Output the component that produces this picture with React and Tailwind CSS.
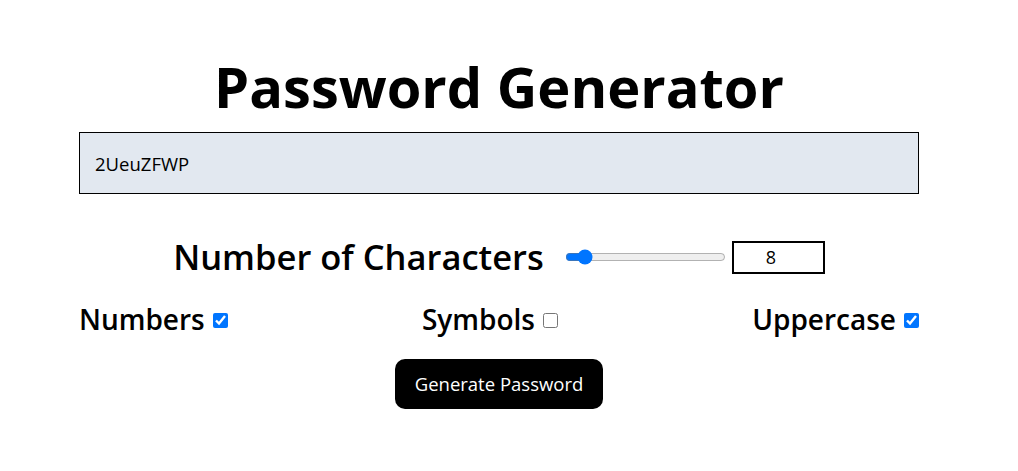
import { useState } from 'react'

function Option({ label, checked, onChange }) {
  return (
    <label className="flex items-center gap-2 text-[28px] font-semibold leading-none">
      {label}
      <input type="checkbox" checked={checked} onChange={onChange} className="mt-[3px] h-[15px] w-[15px] accent-[#0075ff]" />
    </label>
  )
}

export default function App() {
  const [length, setLength] = useState(8)
  const [numbers, setNumbers] = useState(true)
  const [symbols, setSymbols] = useState(false)
  const [upper, setUpper] = useState(true)

  return (
    <div className="min-h-[471px] bg-white font-['Open_Sans',sans-serif] text-black">
      <div className="ml-[79px] w-[840px] pt-[46px]">
        <h1 className="text-center text-[56px] font-bold leading-[80px]">Password Generator</h1>

        <input
          type="text"
          readOnly
          value="2UeuZFWP"
          className="mt-[6px] block h-[62px] w-full border border-black bg-[#e2e8f0] px-[15px] text-[18.5px] outline-none"
        />

        <div className="mt-[46px] flex items-center justify-center">
          <span className="text-[34.5px] font-semibold leading-none">Number of Characters</span>
          <input
            type="range"
            min="4"
            max="50"
            value={length}
            onChange={(e) => setLength(Number(e.target.value))}
            className="ml-[21px] w-[161px] accent-[#0075ff]"
          />
          <input
            type="number"
            value={length}
            onChange={(e) => setLength(Number(e.target.value))}
            className="ml-[6px] h-[33px] w-[93px] border-2 border-black text-center text-[18px] outline-none"
          />
        </div>

        <div className="mt-[30px] flex items-center justify-between">
          <Option label="Numbers" checked={numbers} onChange={() => setNumbers(!numbers)} />
          <Option label="Symbols" checked={symbols} onChange={() => setSymbols(!symbols)} />
          <Option label="Uppercase" checked={upper} onChange={() => setUpper(!upper)} />
        </div>

        <div className="mt-[26px] flex justify-center">
          <button type="button" className="h-[50px] w-[208px] rounded-[10px] bg-black text-[18.5px] text-white">
            Generate Password
          </button>
        </div>
      </div>
    </div>
  )
}
